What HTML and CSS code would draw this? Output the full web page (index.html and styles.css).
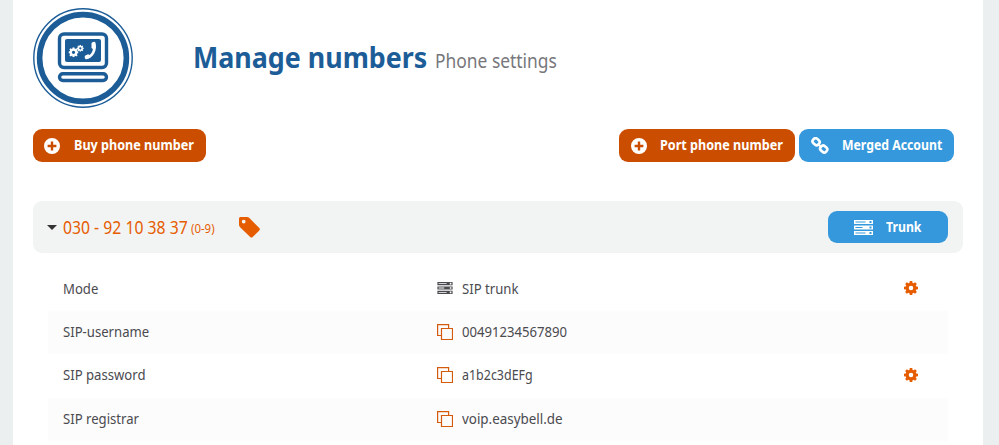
FILE: index.html
```html
<!DOCTYPE html>
<html lang="en">
<head>
<meta charset="utf-8">
<title>Manage numbers</title>
<link rel="stylesheet" href="styles.css">
</head>
<body>
<svg class="defs" width="0" height="0">
  <symbol id="plus" viewBox="0 0 16 16"><path fill="currentColor" fill-rule="evenodd" d="M8 0a8 8 0 1 0 0 16A8 8 0 0 0 8 0ZM6.8 3.6h2.4v3.2h3.2v2.4H9.2v3.2H6.8V9.2H3.6V6.8h3.2Z"/></symbol>
  <symbol id="link" viewBox="0 0 18 18"><g fill="none" stroke="currentColor" stroke-width="2.6"><rect x="-3.6" y="-2.9" width="7.2" height="5.8" rx="2.6" transform="translate(5.1 4.7) rotate(42)"/><rect x="-3.6" y="-2.9" width="7.2" height="5.8" rx="2.6" transform="translate(12.7 12) rotate(42)"/><path d="m6.500 6.500 4.500 4" stroke-width="2"/></g></symbol>
  <symbol id="server" viewBox="0 0 19 15"><path fill="currentColor" fill-rule="evenodd" d="M0 0h19v4H0ZM1.5 1.5v1h10v-1ZM15.5 1v2h2V1ZM0 5.5h19v4H0ZM1.5 7v1h7V7ZM15.5 6.5v2h2v-2ZM0 11h19v4H0ZM1.5 12.5v1h10v-1ZM15.5 12v2h2v-2Z"/></symbol>
  <symbol id="copy" viewBox="0 0 16 16"><path fill="none" stroke="currentColor" stroke-width="1.2" d="M4.5 4.5h11v11h-11ZM4 11.5H.6V.6h11V4"/></symbol>
  <symbol id="gear" viewBox="-8 -8 16 16"><g fill="currentColor"><path fill-rule="evenodd" d="M0-6A6 6 0 1 0 0 6 6 6 0 1 0 0-6ZM0-2.600A2.600 2.600 0 1 1 0 2.600 2.600 2.600 0 1 1 0-2.600Z"/><path id="tooth" d="M-2-5-1.4-8h2.8L2-5ZM-2 5-1.4 8h2.8L2 5Z"/><use href="#tooth" transform="rotate(45)"/><use href="#tooth" transform="rotate(90)"/><use href="#tooth" transform="rotate(135)"/></g></symbol>
</svg>
<main class="page">
  <header class="heading">
    <svg class="emblem" viewBox="0 0 100 100">
      <circle cx="50" cy="50" r="49.2" fill="#fff" stroke="#1c5d98" stroke-width="1.4"/>
      <circle cx="50" cy="50" r="43.4" fill="none" stroke="#1c5d98" stroke-width="5.6"/>
      <rect x="26.5" y="26" width="47" height="33.5" rx="4.5" fill="none" stroke="#1c5d98" stroke-width="3.4"/>
      <rect x="32" y="31" width="36" height="23" rx="2" fill="#1c5d98"/>
      <rect x="26.5" y="65.7" width="47" height="6.8" rx="3.4" fill="none" stroke="#1c5d98" stroke-width="3.4"/>
      <g color="#fff"><use href="#gear" width="10" height="10" transform="translate(35.5 39.3)"/><use href="#gear" width="7" height="7" transform="translate(43.8 36.8)"/></g>
      <path fill="#fff" d="M58.500 35.500c.2-1.600 3.100-2.500 3.800-1.300 1.200 3.100.9 7.700-1.100 11.200-2 3.400-4.700 5.600-8 5.900-1.400-.1-2-3-.9-3.900l2.800-1.200 1.500.8c1.800-1.500 3-3.500 3.300-6l-1.400-.9Z"/>
    </svg>
    <h1><span class="title">Manage numbers</span><span class="subtitle">Phone settings</span></h1>
  </header>
  <nav class="actions">
    <a class="button buy"><svg><use href="#plus"/></svg><span>Buy phone number</span></a>
    <a class="button port"><svg><use href="#plus"/></svg><span>Port phone number</span></a>
    <a class="button blue merged"><svg><use href="#link"/></svg><span>Merged Account</span></a>
  </nav>
  <section class="number">
    <i class="caret"></i><span class="phone">030 - 92 10 38 37</span><span class="range">(0-9)</span>
    <svg class="tag" viewBox="0 0 21 21"><path fill="#e65c00" fill-rule="evenodd" d="M1.800 0H8c1 0 1.700.4 2.400 1.100l9.900 9.900c.8.800.8 1.600 0 2.400l-6.600 6.600c-.8.800-1.700.8-2.500 0L1.100 10.200C.4 9.500 0 8.800 0 7.800v-6C0 .6.600 0 1.800 0ZM4.700 2.700a1.900 1.900 0 1 0 0 3.800 1.900 1.900 0 0 0 0-3.800Z"/></svg>
    <a class="button blue trunk"><svg><use href="#server"/></svg><span>Trunk</span></a>
  </section>
  <section class="details">
    <div class="row"><b>Mode</b><svg class="server"><use href="#server"/></svg><b>SIP trunk</b><svg class="gear"><use href="#gear"/></svg></div>
    <div class="row"><b>SIP-username</b><svg><use href="#copy"/></svg><b>00491234567890</b></div>
    <div class="row"><b>SIP password</b><svg><use href="#copy"/></svg><b class="password">a1b2c3dEFg</b><svg class="gear"><use href="#gear"/></svg></div>
    <div class="row"><b>SIP registrar</b><svg><use href="#copy"/></svg><b class="registrar">voip.easybell.de</b></div>
  </section>
</main>
</body>
</html>
```
FILE: styles.css
```css
* { box-sizing: border-box; }
body { margin: 0; height: 445px; overflow: hidden; background: #ebeff0; font-family: "Noto Sans", sans-serif; color: #4a4a4f; }
.defs { position: absolute; }
.page { width: 970px; height: 445px; margin-left: 13px; padding: 8px 20px 0; background: #fff; }
.heading { display: flex; height: 100px; }
.emblem { width: 100px; height: 100px; }
h1 { display: flex; align-items: baseline; margin: 0 0 0 60px; padding-top: 27px; line-height: 44px; white-space: nowrap; }
.title, .subtitle, .button span, .phone, .range, .row b { transform: scaleX(.875); transform-origin: left center; }
.title { width: 242px; color: #1c5d98; font-size: 29px; font-weight: 700; transform: scaleX(.925); }
.subtitle { color: #77777b; font-size: 20px; font-weight: 400; transform: scaleX(.87); }
.actions { display: flex; width: 921px; margin-top: 21px; }
.button { display: flex; align-items: center; height: 33px; border-radius: 9px; background: #cb4e00; color: #fff; font-size: 14px; font-weight: 700; white-space: nowrap; }
.button span { padding-bottom: 2px; }
.button svg { flex: none; width: 16px; height: 16px; }
.blue { background: #3598dc; }
.buy { width: 173px; padding-left: 11px; }
.buy svg { margin-right: 14px; }
.buy span, .port span { transform: scaleX(.9); }
.port { width: 176px; margin-left: auto; padding-left: 12px; }
.port svg { margin-right: 13px; }
.merged { width: 155px; margin-left: 4px; padding-left: 12px; }
.merged svg { width: 18px; height: 18px; margin-right: 13px; }
.number { display: flex; align-items: center; width: 930px; height: 52px; margin-top: 39px; padding: 0 15px 0 14px; border-radius: 9px; background: #f2f4f4; color: #e65c00; white-space: nowrap; }
.caret { border: 5px solid transparent; border-top: 5px solid #333; border-bottom: 0; margin-right: 6px; }
.phone { width: 128px; padding-bottom: 1px; font-size: 18px; }
.range { width: 48px; padding-top: 3px; font-size: 12px; transform: scaleX(.95); }
.tag { width: 21px; height: 21px; }
.trunk { width: 120px; height: 32px; margin-left: auto; padding-left: 26px; }
.trunk svg { width: 19px; height: 15px; margin-right: 13px; }
.details { width: 900px; margin: 14px 0 0 15px; }
.row { display: grid; grid-template-columns: 374px 25px 442px 14px; align-items: center; height: 43px; padding: 0 0 2px 15px; font-size: 15px; }
.row:nth-child(odd) { height: 44px; }
.row:nth-child(even) { background: #fcfcfc; }
.row b { padding-bottom: 1px; font-weight: 400; white-space: nowrap; }
.row:nth-child(n+3) b { padding-bottom: 2px; }
.row .password { transform: scaleX(.83); }
.row .registrar { transform: scaleX(.893); }
.row svg { width: 16px; height: 16px; color: #d45b0c; }
.row .server { height: 12px; color: #4a4a4f; }
.row .gear { width: 14px; height: 14px; color: #e65c00; }
```
